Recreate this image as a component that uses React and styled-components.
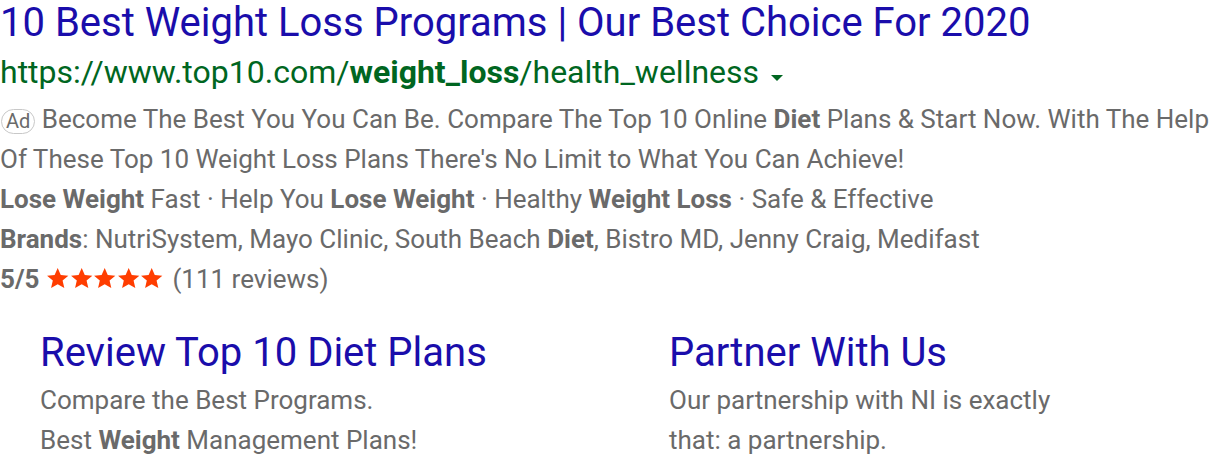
import styled, { createGlobalStyle } from 'styled-components'

const GlobalStyle = createGlobalStyle`
    body{
        margin: 0;
        background: #ffffff;
        font-family: Roboto, "Noto Sans", sans-serif;
    }
`

const Star = () =>(
    <svg width="23.4" height="23" viewBox="0 0 24 24">
        <path fill="#ff3d00" d="M12 1l3.2 7.3 7.9.7-6 5.2 1.8 7.8L12 17.9 5.1 22l1.8-7.8-6-5.2 7.9-.7z"/>
    </svg>
)

const App = () =>{
    return(
        <Ad>
            <GlobalStyle />
            <Title>10 Best Weight Loss Programs | Our Best Choice For 2020</Title>
            <Url>
                https://www.top10.com/<b>weight_loss</b>/health_wellness
                <Caret />
            </Url>
            <Text>
                <Badge>Ad</Badge> Become The Best You You Can Be. Compare The Top 10 Online <b>Diet</b> Plans &amp; Start Now. With The Help Of These Top 10 Weight Loss Plans There's No Limit to What You Can Achieve!
            </Text>
            <Text>
                <b>Lose Weight</b> Fast · Help You <b>Lose Weight</b> · Healthy <b>Weight Loss</b> · Safe &amp; Effective
            </Text>
            <Text>
                <b>Brands</b>: NutriSystem, Mayo Clinic, South Beach <b>Diet</b>, Bistro MD, Jenny Craig, Medifast
            </Text>
            <Rating>
                <b>5/5</b>
                <Stars>
                    {[0,1,2,3,4].map(i => <Star key={i} />)}
                </Stars>
                (111 reviews)
            </Rating>
            <Sitelinks>
                <Sitelink>
                    <LinkTitle>Review Top 10 Diet Plans</LinkTitle>
                    <Text>Compare the Best Programs.</Text>
                    <Text>Best <b>Weight</b> Management Plans!</Text>
                </Sitelink>
                <Sitelink>
                    <LinkTitle>Partner With Us</LinkTitle>
                    <Text>Our partnership with NI is exactly</Text>
                    <Text>that: a partnership.</Text>
                </Sitelink>
            </Sitelinks>
        </Ad>
    )
}

const Ad = styled.div`
    width: 1216px;
    height: 470px;
    overflow: hidden;
    padding-top: 1px;
    box-sizing: border-box;
`
const Title = styled.div`
    font-size: 40px;
    line-height: 44px;
    color: #1a0dab;
    white-space: nowrap;
`
const Url = styled.div`
    font-size: 32px;
    line-height: 54px;
    color: #006621;
    display: flex;
    align-items: center;
    white-space: nowrap;
    b{
        font-weight: 700;
    }
`
const Caret = styled.span`
    width: 0;
    height: 0;
    margin-left: 12px;
    margin-top: 12px;
    border-left: 6px solid transparent;
    border-right: 6px solid transparent;
    border-top: 6px solid #006621;
`
const Text = styled.div`
    font-size: 26px;
    line-height: 40px;
    color: #6a6a6a;
    b{
        font-weight: 700;
    }
`
const Badge = styled.span`
    display: inline-block;
    font-size: 20px;
    line-height: 23px;
    padding: 0 4px;
    margin-left: 1px;
    border: 1px solid #c8c8c8;
    border-radius: 13px;
    color: #6a6a6a;
    vertical-align: 0;
`
const Rating = styled(Text)`
    display: flex;
    align-items: center;
    gap: 7px;
`
const Stars = styled.span`
    display: flex;
    margin-top: -2px;
    margin-right: 2px;
`
const Sitelinks = styled.div`
    display: grid;
    grid-template-columns: 629px 1fr;
    padding: 30px 0 0 40px;
`
const Sitelink = styled.div``
const LinkTitle = styled.div`
    font-size: 40px;
    line-height: 48px;
    margin-bottom: 3px;
    color: #1a0dab;
`

export default App
